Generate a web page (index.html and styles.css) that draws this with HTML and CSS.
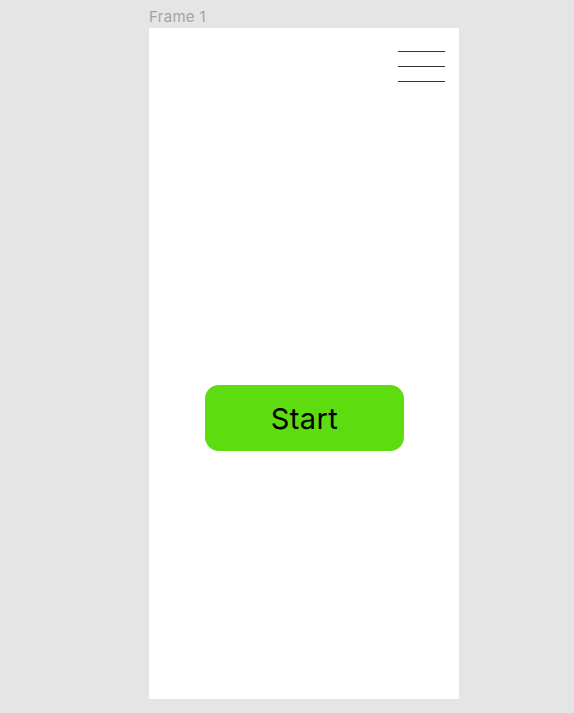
FILE: index.html
```html
<!DOCTYPE html>
<html>
<head>
<meta charset="utf-8">
<link rel="stylesheet" href="styles.css">
</head>
<body>
<div class="canvas">
  <div class="frame-label">Frame 1</div>
  <div class="frame">
    <div class="topbar">
      <div class="menu">
        <span class="bar"></span>
        <span class="bar"></span>
        <span class="bar"></span>
      </div>
    </div>
    <div class="center">
      <button class="start">Start</button>
    </div>
  </div>
</div>
</body>
</html>
```
FILE: styles.css
```css
html, body {
  margin: 0;
  padding: 0;
  background: #e5e5e5;
}
.canvas {
  padding-left: 149px;
  display: flex;
  flex-direction: column;
  align-items: flex-start;
}
.frame-label {
  height: 28px;
  box-sizing: border-box;
  padding-top: 8px;
  font-family: Inter, "Liberation Sans", sans-serif;
  font-size: 15px;
  letter-spacing: 0.3px;
  line-height: 18px;
  color: #a3a3a3;
}
.frame {
  width: 310px;
  height: 671px;
  background: #ffffff;
  display: flex;
  flex-direction: column;
}
.topbar {
  display: flex;
  justify-content: flex-end;
  padding: 23px 14px 0 0;
}
.menu {
  display: flex;
  flex-direction: column;
  gap: 14px;
  width: 47px;
}
.bar {
  display: block;
  height: 1px;
  background: #333333;
}
.center {
  display: flex;
  justify-content: center;
  padding-top: 303px;
}
.start {
  width: 199px;
  height: 66px;
  border: none;
  border-radius: 14px;
  background: #5ddc10;
  color: #000000;
  font-family: Inter, "Open Sans", sans-serif;
  font-size: 29px;
  font-weight: 400;
  letter-spacing: 0.4px;
  padding: 0;
  margin-left: 1px;
}
```
